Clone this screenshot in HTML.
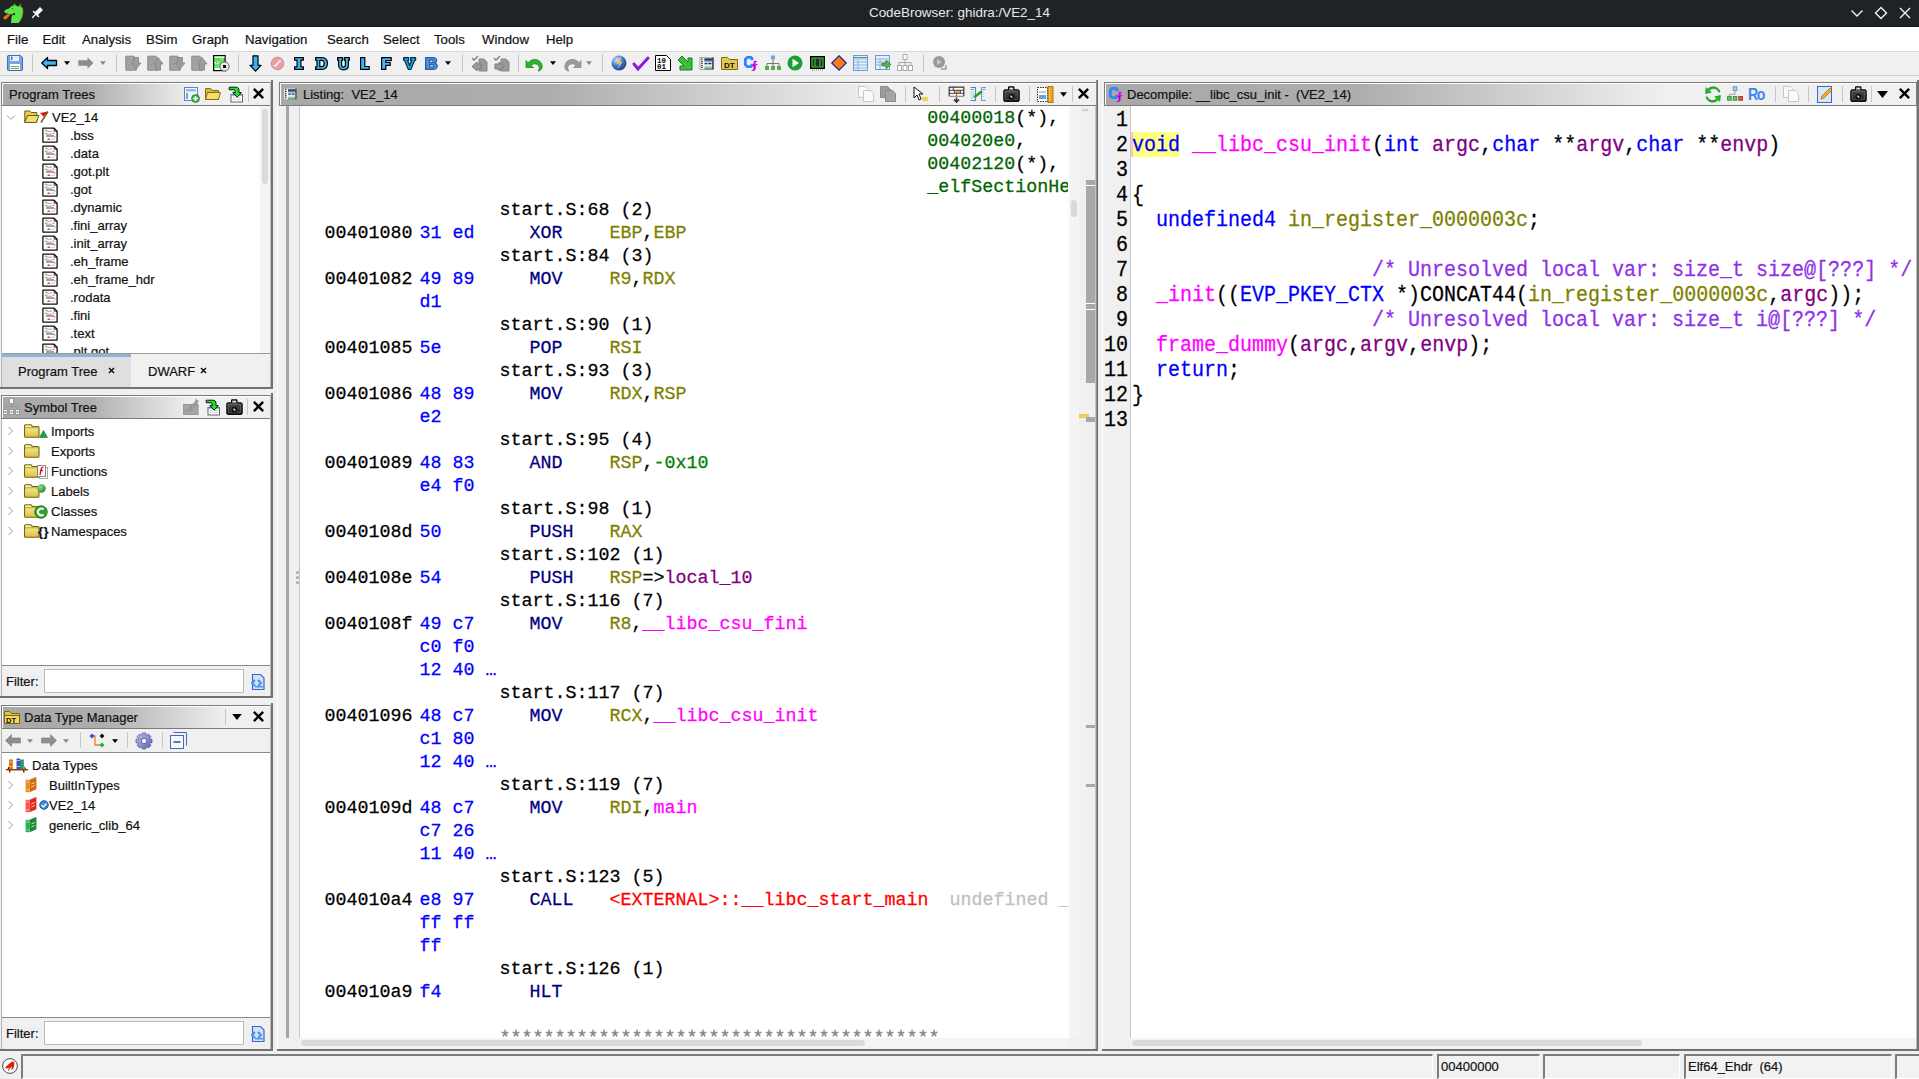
<!DOCTYPE html>
<html><head><meta charset="utf-8">
<style>
*{box-sizing:border-box;margin:0;padding:0}
html,body{width:1919px;height:1079px;overflow:hidden;background:#f0f0f0;font-family:"Liberation Sans",sans-serif;font-size:13px;color:#000}
.a{position:absolute}
svg.a{overflow:visible}
.t{position:absolute;white-space:pre;line-height:1}
.mi{position:absolute;top:33px;font-size:13.2px;white-space:pre;line-height:1;color:#111;-webkit-text-stroke:0.2px #111}
.hd{position:absolute;height:24px;border:1px solid #7b7b7b;border-bottom-color:#7b7b7b}
.hd:before{content:"";position:absolute;left:0;top:0;right:0;bottom:0;border-top:1px solid #fff;border-left:1px solid #fff}
.ht{position:absolute;font-size:13px;color:#111;white-space:pre;line-height:1;-webkit-text-stroke:0.2px #111;top:90px}
.L{position:absolute;font-family:"Liberation Mono",monospace;font-size:18.33px;line-height:23px;white-space:pre;color:#000;-webkit-text-stroke:0.25px currentColor;transform:scaleY(1.045);transform-origin:0 16.4px}
.cb{color:#0000ff}.cm{color:#000080}.creg{color:#808000}.cp{color:#000}.cnum{color:#008000}.cvar{color:#800080}.cfn{color:#ff00ff}.cext{color:#ff0000}.cund{color:#c0c0c0}.cr{color:#006400}.cstar{color:#808080}
.D{position:absolute;font-family:"Liberation Mono",monospace;font-size:20px;line-height:25px;white-space:pre;color:#000;-webkit-text-stroke:0.25px currentColor;transform:scaleY(1.08);transform-origin:0 17.8px}
.num{left:-27px;width:24px;text-align:right}
.dkw{color:#0000ff}.dfn{color:#ff00ff}.dpa{color:#800080}.dlv{color:#808000}.dcm{color:#9030e8}.dp{color:#000}
.tr{position:absolute;font-size:13px;white-space:pre;line-height:1;color:#111;-webkit-text-stroke:0.2px #111}
.vs{position:absolute;width:1px;background:#c6c6c6}
.white{position:absolute;background:#fff}
.fld{position:absolute;border-top:2px solid #7d7d7d;border-left:2px solid #7d7d7d;border-bottom:1px solid #fff;border-right:1px solid #fff;background:#f2f2f2}
</style></head><body>
<svg width="0" height="0" style="position:absolute">
<defs>
 <symbol id="doc" viewBox="0 0 16 16">
  <path d="M0.9 1.2h11.2l3 3v10.9h-14.2z" fill="#fff" stroke="#111" stroke-width="1.3" stroke-linejoin="round"/>
  <path d="M12.1 1.2v3h3" fill="none" stroke="#111" stroke-width="0.8"/>
  <path d="M2.8 3.2h2.5M2.8 6.2h2.5" stroke="#a0a040" stroke-width="1"/>
  <path d="M4.5 4.2h5.5M4 7.2h6" stroke="#8a8a8a" stroke-width="0.8"/>
  <path d="M10.5 6.2h2" stroke="#d07020" stroke-width="1"/>
  <path d="M4 9h8" stroke="#9a9a9a" stroke-width="1.8"/>
  <path d="M12 10h1.5" stroke="#666" stroke-width="0.8"/>
  <path d="M5.5 12.2h2.5" stroke="#d02020" stroke-width="1.2"/><path d="M8.5 12.2h4.5" stroke="#bbb" stroke-width="0.8"/>
 </symbol>
 <symbol id="folder" viewBox="0 0 16 14">
  <defs><linearGradient id="fg" x1="0" y1="0" x2="0" y2="1"><stop offset="0" stop-color="#fbf2a8"/><stop offset="1" stop-color="#dcc040"/></linearGradient></defs>
  <path d="M1.5 0.8h5.5l1.5 1.7h5.5a1 1 0 0 1 1 1v8.5a1.2 1.2 0 0 1-1.2 1.2h-12.3a1 1 0 0 1-1-1v-10.4a1 1 0 0 1 1-1z" fill="url(#fg)" stroke="#7a6410" stroke-width="1.1"/>
  <path d="M1 3.8h14" stroke="#a89020" stroke-width="0.8"/>
 </symbol>
 <symbol id="chevr" viewBox="0 0 8 10"><path d="M1.5 1l4 4l-4 4" fill="none" stroke="#9a9a9a" stroke-width="1"/></symbol>
 <symbol id="chevd" viewBox="0 0 10 8"><path d="M1 1.5l4 4l4-4" fill="none" stroke="#9a9a9a" stroke-width="1"/></symbol>
 <symbol id="xx" viewBox="0 0 14 14"><path d="M2 2l10 10M12 2l-10 10" stroke="#000" stroke-width="2.6"/></symbol>
 <symbol id="cam" viewBox="0 0 17 17"><defs><linearGradient id="cg" x1="0" y1="0" x2="0" y2="1"><stop offset="0" stop-color="#5a5e62"/><stop offset="1" stop-color="#1a1c1e"/></linearGradient></defs><path d="M5.5 0.8h5.5v3h4a1.2 1.2 0 0 1 1.2 1.2v9.2a1.2 1.2 0 0 1-1.2 1.2h-13a1.2 1.2 0 0 1-1.2-1.2v-9.2a1.2 1.2 0 0 1 1.2-1.2h3.5z" fill="url(#cg)" stroke="#000" stroke-width="1"/><rect x="6.5" y="1.8" width="3.5" height="1.6" fill="#e0e0e0"/><rect x="2.2" y="5.2" width="12.4" height="8.5" fill="none" stroke="#777" stroke-width="0.5"/><circle cx="8.5" cy="10.8" r="3.6" fill="#101214" stroke="#444" stroke-width="0.8"/><path d="M7.5 9.8l1.8 1.8" stroke="#f0f0f0" stroke-width="1.3"/></symbol>
 <symbol id="tri" viewBox="0 0 8 5"><path d="M0 0h8l-4 5z" fill="#000"/></symbol>
 <symbol id="trig" viewBox="0 0 8 5"><path d="M0 0h8l-4 5z" fill="#8a8a8a"/></symbol>
 <symbol id="cf" viewBox="0 0 18 18"><path d="M4 1h5l2 2v2.5h-3v-1.5h-3l-1 1v4.8l1 1h3v-1.5h3v2.5l-2 2h-5l-3-3v-6.8z" fill="#2a88ff"/><path d="M11.8 6h2.2l1.2 1.3h-1.7v2.1h1.8v1.5h-1.8v4l-1.7 2.1h-2.1l-1.2-1.2h1.7l1-1v-3.9h-1.3v-1.5h1.3v-2.1z" fill="#ee00ee"/><path d="M10.6 11h1.4v3.5l-0.8 1" stroke="#900090" stroke-width="1" fill="none"/></symbol>
 <symbol id="filt" viewBox="0 0 18 18"><path d="M3.5 1.5h8l3.5 3.5v11.5h-11.5z" fill="#cfe0f8" stroke="#3a6ac8" stroke-width="1.2"/><path d="M6 7l-3 3l3 3M9 7l3 3l-3 3" fill="none" stroke="#4a90e8" stroke-width="2"/><rect x="6" y="13" width="8" height="1.5" fill="#4aa0f0"/></symbol>
 <symbol id="dtf" viewBox="0 0 16 16"><path d="M0.5 2.5h5l2 2h8v10h-15z" fill="#e6c440" stroke="#7a6410"/><path d="M0.5 6.5h15v8h-15z" fill="#f2d860" stroke="#7a6410"/><text x="2" y="14" font-family="Liberation Sans" font-weight="bold" font-size="7.5" fill="#111">DT</text></symbol>
</defs>
</svg>

<!-- TITLE BAR -->
<div class="a" style="left:0;top:0;width:1919px;height:27px;background:#202326;border-bottom:1px solid #141618"></div>
<svg class="a" style="left:0;top:0" width="48" height="27" viewBox="0 0 48 27">
 <path d="M11 23L11.5 17L13 14.5L9 14L5.5 13L4 11.5L6 9.5L9 8.5L11 6.5L13 5.5L15.5 5L17.5 6.5L20 6L22.5 8L23 12L22 17L20 21L18.5 23z" fill="#5ae64a"/>
 <path d="M20 6L22.5 8L23 12L22 17L20 21" stroke="#8a9a10" stroke-width="1" fill="none" opacity="0.7"/>
 <path d="M13 5.5L14.5 3L16 5.2zM18.5 6L21.5 3L21 6.5z" fill="#7a8a10"/>
 <path d="M3 17.5L7 14.5L10.5 14L8.5 17L5 20z" fill="#f07010"/>
 <circle cx="14" cy="14" r="1.1" fill="#111"/><circle cx="12.5" cy="8.5" r="0.8" fill="#c03a20"/>
 <path d="M41.5 8.5L36 14" stroke="#f4f4f4" stroke-width="4.2"/>
 <path d="M33.5 11.5L38.5 16.5" stroke="#f4f4f4" stroke-width="1.6" stroke-linecap="round"/>
 <path d="M35.8 14.2L32.5 17.5" stroke="#f4f4f4" stroke-width="1.4" stroke-linecap="round"/>
</svg>
<div class="t" style="left:869px;top:6px;font-size:13.4px;color:#e8e8e8">CodeBrowser: ghidra:/VE2_14</div>
<svg class="a" style="left:1850px;top:9px" width="14" height="9" viewBox="0 0 14 9"><path d="M1.5 1.5l5.5 5.5l5.5-5.5" stroke="#f2f2f2" stroke-width="1.4" fill="none"/></svg>
<svg class="a" style="left:1874px;top:6px" width="14" height="14" viewBox="0 0 14 14"><path d="M7 1.5l5.5 5.5l-5.5 5.5l-5.5-5.5z" stroke="#f2f2f2" stroke-width="1.4" fill="none"/></svg>
<svg class="a" style="left:1899px;top:7px" width="12" height="12" viewBox="0 0 12 12"><path d="M1 1l10 10M11 1l-10 10" stroke="#f2f2f2" stroke-width="1.4"/></svg>

<!-- MENU BAR -->
<div class="a" style="left:0;top:27px;width:1919px;height:25px;background:#fff;border-bottom:1px solid #dadada"></div>
<div class="mi" style="left:7px">File</div>
<div class="mi" style="left:42.5px">Edit</div>
<div class="mi" style="left:82px">Analysis</div>
<div class="mi" style="left:146px">BSim</div>
<div class="mi" style="left:192px">Graph</div>
<div class="mi" style="left:245px">Navigation</div>
<div class="mi" style="left:327px">Search</div>
<div class="mi" style="left:383px">Select</div>
<div class="mi" style="left:434px">Tools</div>
<div class="mi" style="left:482px">Window</div>
<div class="mi" style="left:546px">Help</div>

<!-- TOOLBAR -->
<div class="a" style="left:0;top:52px;width:1919px;height:24px;background:#f0f0f0;border-bottom:1px solid #d2d2d2"></div>
<!-- separators -->
<div class="vs" style="left:32px;top:54px;height:18px"></div>
<div class="vs" style="left:116px;top:54px;height:18px"></div>
<div class="vs" style="left:238px;top:54px;height:18px"></div>
<div class="vs" style="left:462px;top:54px;height:18px"></div>
<div class="vs" style="left:518px;top:54px;height:18px"></div>
<div class="vs" style="left:602px;top:54px;height:18px"></div>
<div class="vs" style="left:923px;top:54px;height:18px"></div>
<!-- save -->
<svg class="a" style="left:7px;top:55px" width="16" height="16" viewBox="0 0 16 16"><path d="M0.5 1.5a1 1 0 0 1 1-1h12l2 2v12a1 1 0 0 1-1 1h-13a1 1 0 0 1-1-1z" fill="#7aa4e0" stroke="#3c6cc0"/><rect x="3" y="1" width="9" height="5" fill="#e8f0fb"/><rect x="4" y="1.5" width="1.4" height="3.5" fill="#3c6cc0"/><rect x="3" y="9" width="10" height="6" fill="#fff"/><rect x="4" y="11" width="8" height="1" fill="#6ab04c"/><rect x="4" y="13" width="8" height="1" fill="#6ab04c"/></svg>
<!-- back / fwd -->
<svg class="a" style="left:41px;top:57px" width="17" height="13" viewBox="0 0 17 13"><path d="M0.8 6l5.7-5.5v3h9v5h-9v3z" fill="#3fb6f6" stroke="#000" stroke-width="1.3" stroke-linejoin="round"/></svg>
<svg class="a" style="left:64px;top:61px" width="6" height="4"><use href="#tri"/></svg>
<svg class="a" style="left:77px;top:57px" width="17" height="13" viewBox="0 0 17 13"><path d="M16.4 6l-5.9-5.7v3h-9.2v5.4h9.2v3z" fill="#8c8c8c"/></svg>
<svg class="a" style="left:100px;top:61px" width="6" height="4"><use href="#trig"/></svg>
<!-- gray doc icons -->
<svg class="a" style="left:125px;top:55px" width="17" height="17" viewBox="0 0 17 17"><path d="M0.8 1.2h8l2.5 2.5v11.5h-10.5z" fill="#a3a3a3" stroke="#8a8a8a"/><path d="M2.5 4h1M4.5 5h2M2.5 7.5h1M3 10h2" stroke="#8a8a8a" stroke-width="0.6"/><path d="M8.5 2.5h5v5.5h2.5l-5 6l-5-6h2.5z" fill="#9c9c9c" stroke="#888" stroke-width="0.9" stroke-linejoin="round"/></svg>
<svg class="a" style="left:147px;top:55px" width="17" height="17" viewBox="0 0 17 17"><path d="M0.8 1.2h8l2.5 2.5v11.5h-10.5z" fill="#a3a3a3" stroke="#8a8a8a"/><path d="M2.5 4h1M4.5 5h2M2.5 7.5h1M3 10h2" stroke="#8a8a8a" stroke-width="0.6"/><path d="M8.5 15v-6h-2.5l5-6.5l5 6.5h-2.5v6z" fill="#9c9c9c" stroke="#888" stroke-width="0.9" stroke-linejoin="round"/></svg>
<svg class="a" style="left:169px;top:55px" width="17" height="17" viewBox="0 0 17 17"><path d="M0.8 1.2h8l2.5 2.5v11.5h-10.5z" fill="#a3a3a3" stroke="#8a8a8a"/><path d="M2.5 4h1M4.5 5h2M2.5 7.5h1M3 10h2" stroke="#8a8a8a" stroke-width="0.6"/><path d="M8.5 2.5h5v5.5h2.5l-5 6l-5-6h2.5z" fill="#9c9c9c" stroke="#888" stroke-width="0.9" stroke-linejoin="round"/></svg>
<svg class="a" style="left:191px;top:55px" width="17" height="17" viewBox="0 0 17 17"><path d="M0.8 1.2h8l2.5 2.5v11.5h-10.5z" fill="#a3a3a3" stroke="#8a8a8a"/><path d="M2.5 4h1M4.5 5h2M2.5 7.5h1M3 10h2" stroke="#8a8a8a" stroke-width="0.6"/><path d="M8.5 15v-6h-2.5l5-6.5l5 6.5h-2.5v6z" fill="#9c9c9c" stroke="#888" stroke-width="0.9" stroke-linejoin="round"/></svg>
<svg class="a" style="left:213px;top:55px" width="17" height="17" viewBox="0 0 17 17"><rect x="0.6" y="0.6" width="11.5" height="15" fill="#62e862" stroke="#000" stroke-width="1.2"/><rect x="1.5" y="1.5" width="10" height="1.3" fill="#fff"/><rect x="1.5" y="7" width="4" height="1.5" fill="#fff"/><rect x="1.5" y="13" width="10" height="2" fill="#fff"/><circle cx="3" cy="3.5" r="0.6" fill="#a05010"/><circle cx="5.5" cy="4.5" r="0.6" fill="#a05010"/><circle cx="3.5" cy="7.5" r="0.6" fill="#a05010"/><circle cx="11.5" cy="11.5" r="4.6" fill="#e8e8e8" stroke="#666" stroke-width="1"/><rect x="10" y="10" width="3" height="3" fill="#111"/></svg>
<!-- down arrow, no-sign -->
<svg class="a" style="left:249px;top:55px" width="13" height="17" viewBox="0 0 13 17"><path d="M4 0.8h5v9.5h3l-5.5 5.8l-5.5-5.8h3z" fill="#3fb0f6" stroke="#000" stroke-width="1.2" stroke-linejoin="round"/></svg>
<svg class="a" style="left:270px;top:56px" width="15" height="15" viewBox="0 0 15 15"><circle cx="7.5" cy="7.5" r="6.3" fill="#e6a0a0" stroke="#dc8a8a" stroke-width="1"/><path d="M4.3 10.7l6.4-6.4" stroke="#f8e4e4" stroke-width="2.2"/></svg>
<!-- letter icons -->
<svg class="a" style="left:294px;top:57px" width="11" height="13" viewBox="0 0 11 13"><path d="M0.6 0.6h8.8v2.6h-2.5v6.6h2.5v2.6h-8.8v-2.6h2.5v-6.6h-2.5z" fill="#3cb8f8" stroke="#000" stroke-width="1.2" fill-rule="evenodd" stroke-linejoin="round"/></svg>
<svg class="a" style="left:315px;top:57px" width="14" height="13" viewBox="0 0 14 13"><path d="M0.6 0.6h6.4c3.6 0 5.4 2.4 5.4 5.9s-1.8 5.9-5.4 5.9h-6.4v-2.6h1.4v-6.6h-1.4z M4.8 3.3v6.4h1.8c1.6 0 2.6-1.2 2.6-3.2s-1-3.2-2.6-3.2z" fill="#3cb8f8" stroke="#000" stroke-width="1.2" fill-rule="evenodd" stroke-linejoin="round"/></svg>
<svg class="a" style="left:337px;top:57px" width="14" height="13" viewBox="0 0 14 13"><path d="M0.6 0.6h5v2.6h-1v4.8c0 1.5 0.7 2.1 1.9 2.1s1.9-0.6 1.9-2.1v-4.8h-1v-2.6h5v2.6h-1v5c0 3-1.9 4.6-4.9 4.6s-4.9-1.6-4.9-4.6v-5h-1z" fill="#3cb8f8" stroke="#000" stroke-width="1.2" fill-rule="evenodd" stroke-linejoin="round"/></svg>
<svg class="a" style="left:360px;top:57px" width="11" height="13" viewBox="0 0 11 13"><path d="M0.6 0.6h4.2v8.9h4.4v2.9h-8.6z" fill="#3cb8f8" stroke="#000" stroke-width="1.2" fill-rule="evenodd" stroke-linejoin="round"/></svg>
<svg class="a" style="left:381px;top:57px" width="12" height="13" viewBox="0 0 12 13"><path d="M0.6 0.6h9.6v3h-5.4v1.9h4.4v2.9h-4.4v4h-4.2z" fill="#3cb8f8" stroke="#000" stroke-width="1.2" fill-rule="evenodd" stroke-linejoin="round"/></svg>
<svg class="a" style="left:403px;top:57px" width="14" height="13" viewBox="0 0 14 13"><path d="M0.6 0.6h5v2.6h-1l2 5.6l2-5.6h-1v-2.6h5v2.6h-1l-3.6 9.2h-2.8l-3.6-9.2h-1z" fill="#18a8f0" stroke="#0a2a40" stroke-width="1.2" fill-rule="evenodd" stroke-linejoin="round"/></svg>
<svg class="a" style="left:425px;top:57px" width="14" height="13" viewBox="0 0 14 13"><path d="M0.6 0.6h7c2.6 0 4 1.2 4 3c0 1.3-0.8 2.2-2 2.6c1.5 0.4 2.5 1.4 2.5 3c0 2.2-1.7 3.2-4.5 3.2h-7z M4.6 3.1v2.5h2.4c0.8 0 1.3-0.4 1.3-1.25s-0.5-1.25-1.3-1.25z M4.6 7.6v2.6h2.8c0.9 0 1.4-0.5 1.4-1.3s-0.5-1.3-1.4-1.3z" fill="#4a94dc" stroke="#2a5aa8" stroke-width="1.2" fill-rule="evenodd" stroke-linejoin="round"/></svg>
<svg class="a" style="left:445px;top:61px" width="6" height="4"><use href="#tri"/></svg>
<!-- gray check-doc icons -->
<svg class="a" style="left:471px;top:55px" width="17" height="17" viewBox="0 0 17 17"><path d="M1 3l2 2l4-4" stroke="#888" stroke-width="1.6" fill="none"/><path d="M8 4h5l3 3v9h-8z" fill="#999" stroke="#888"/><path d="M10 9h-4v-2l-5 4.5l5 4.5v-2h4z" fill="#9a9a9a" stroke="#7c7c7c"/></svg>
<svg class="a" style="left:493px;top:55px" width="17" height="17" viewBox="0 0 17 17"><path d="M1 3l2 2l4-4" stroke="#888" stroke-width="1.6" fill="none"/><path d="M8 4h5l3 3v9h-8z" fill="#999" stroke="#888"/><path d="M2 9h4v-2l5 4.5l-5 4.5v-2h-4z" fill="#9a9a9a" stroke="#7c7c7c"/></svg>
<!-- undo / redo -->
<svg class="a" style="left:526px;top:57px" width="18" height="15" viewBox="0 0 18 15"><path d="M2 6c3-5 12-5 14 2c1 4-2 6-4 6c2-2 2-6-2-7c-2-0.5-4 0-5 2l2.5 1.5h-7.5v-7z" fill="#30b030" stroke="#1c8a1c" stroke-width="0.8"/></svg>
<svg class="a" style="left:550px;top:61px" width="6" height="4"><use href="#tri"/></svg>
<svg class="a" style="left:563px;top:57px" width="18" height="15" viewBox="0 0 18 15"><path d="M16 6c-3-5-12-5-14 2c-1 4 2 6 4 6c-2-2-2-6 2-7c2-0.5 4 0 5 2l-2.5 1.5h7.5v-7z" fill="#9a9a9a" stroke="#888" stroke-width="0.8"/></svg>
<svg class="a" style="left:586px;top:61px" width="6" height="4"><use href="#trig"/></svg>
<!-- globe -->
<svg class="a" style="left:611px;top:55px" width="16" height="16" viewBox="0 0 16 16"><defs><radialGradient id="gl" cx="0.35" cy="0.3" r="0.8"><stop offset="0" stop-color="#cfe6ff"/><stop offset="0.5" stop-color="#3a78d0"/><stop offset="1" stop-color="#123a80"/></radialGradient></defs><circle cx="8" cy="8" r="7.5" fill="url(#gl)"/><path d="M9.5 1.5l-4 7h3l-2 6l5-8h-3l2-5z" fill="#ffc93a"/></svg>
<!-- check -->
<svg class="a" style="left:633px;top:56px" width="17" height="15" viewBox="0 0 17 15"><path d="M1 8l4 5l10-11" stroke="#8a1ae0" stroke-width="3" fill="none" stroke-linecap="round"/></svg>
<!-- 1001 -->
<svg class="a" style="left:655px;top:55px" width="16" height="16" viewBox="0 0 16 16"><path d="M0.5 0.5h11l4 4v11h-15z" fill="#fff" stroke="#000"/><text x="2" y="7.5" font-family="Liberation Mono" font-weight="bold" font-size="7.5" fill="#000">10</text><text x="2" y="14" font-family="Liberation Mono" font-weight="bold" font-size="7.5" fill="#000">01</text></svg>
<!-- green arrow -->
<svg class="a" style="left:677px;top:55px" width="16" height="16" viewBox="0 0 16 16"><path d="M1 5l4-4l6 6v-4h4v12h-12v-4h4z" fill="#3cc03c" stroke="#1a7a2a"/></svg>
<!-- film -->
<svg class="a" style="left:700px;top:57px" width="14" height="13" viewBox="0 0 13 12"><defs><linearGradient id="lsg2" x1="0" y1="0" x2="0" y2="1"><stop offset="0" stop-color="#a0e0a0"/><stop offset="0.15" stop-color="#1a2a70"/><stop offset="0.45" stop-color="#e8f0ff"/><stop offset="0.7" stop-color="#d0f4e0"/><stop offset="1" stop-color="#607a60"/></linearGradient></defs><rect x="0" y="0.5" width="12.5" height="11" fill="#fafafa" stroke="#666" stroke-width="0.5"/><circle cx="1.8" cy="1.8" r="0.7" fill="#000"/><circle cx="1.8" cy="3.8" r="0.7" fill="#000"/><circle cx="1.8" cy="5.8" r="0.7" fill="#000"/><circle cx="1.8" cy="7.8" r="0.7" fill="#000"/><circle cx="1.8" cy="9.8" r="0.7" fill="#000"/><rect x="4" y="0.5" width="7.5" height="11" fill="url(#lsg2)"/><rect x="4.3" y="5.5" width="2.5" height="1.2" fill="#1a2a60"/><rect x="7.6" y="5.5" width="3" height="1.2" fill="#1a2a60"/><rect x="11.4" y="0.5" width="1.1" height="11" fill="#1a2a1a"/></svg>
<!-- DT folder -->
<svg class="a" style="left:721px;top:55px" width="17" height="16" viewBox="0 0 17 16"><path d="M0.5 2.5h6l2 2h8v10h-16z" fill="#e8c84a" stroke="#7a6a10"/><text x="3" y="13" font-family="Liberation Sans" font-weight="bold" font-size="8" fill="#111">DT</text></svg>
<!-- Cf -->
<svg class="a" style="left:743px;top:55px" width="17" height="17"><use href="#cf"/></svg>
<!-- tree -->
<svg class="a" style="left:765px;top:55px" width="16" height="16" viewBox="0 0 16 16"><rect x="6" y="0.5" width="4" height="4" fill="#6aa8f0"/><path d="M8 4.5v4M2 8.5h12M2 8.5v3M8 8.5v3M14 8.5v3" stroke="#777"/><rect x="0" y="11" width="4" height="4" fill="#52b052"/><rect x="6" y="11" width="4" height="4" fill="#52b052"/><rect x="12" y="11" width="4" height="4" fill="#52b052"/></svg>
<!-- play -->
<svg class="a" style="left:787px;top:55px" width="16" height="16" viewBox="0 0 16 16"><circle cx="8" cy="8" r="7.5" fill="#18a030"/><path d="M5.5 3.8l6.5 4.2l-6.5 4.2z" fill="#fff"/></svg>
<!-- chip -->
<svg class="a" style="left:810px;top:56px" width="15" height="15" viewBox="0 0 15 15"><rect x="0.5" y="0.5" width="14" height="12" fill="#111" stroke="#000"/><rect x="2" y="2" width="11" height="9" fill="#2a2a2a" stroke="#2ee02e" stroke-width="1"/><path d="M5 3v7M10 3v7" stroke="#2ee02e"/><path d="M2 14h11" stroke="#888" stroke-dasharray="1 1"/></svg>
<!-- diamond -->
<svg class="a" style="left:831px;top:55px" width="16" height="16" viewBox="0 0 16 16"><path d="M8 0.8l7.2 7.2l-7.2 7.2l-7.2-7.2z" fill="#ff7a10" stroke="#1a2aa0" stroke-width="1.3"/></svg>
<!-- table -->
<svg class="a" style="left:853px;top:55px" width="15" height="16" viewBox="0 0 15 16"><rect x="0.5" y="0.5" width="14" height="15" fill="#e8f0fb" stroke="#6a9ad8"/><path d="M1 4h13M1 7h13M1 10h13M1 13h13M5 4v11" stroke="#8ab0e0"/><path d="M1 2.5h13" stroke="#4aa04a"/></svg>
<svg class="a" style="left:875px;top:55px" width="17" height="16" viewBox="0 0 17 16"><rect x="0.5" y="0.5" width="14" height="14" fill="#e8f0fb" stroke="#6a9ad8"/><path d="M1 4h13M1 7h13M1 10h13M5 4v10" stroke="#8ab0e0"/><path d="M7 8h4v-3l5 4.5l-5 4.5v-3h-4z" fill="#5ab04a" stroke="#2a7a2a" stroke-width="0.7"/></svg>
<svg class="a" style="left:897px;top:54px" width="16" height="17" viewBox="0 0 16 17"><path d="M6 0.5h4v5h-4z" fill="#fff" stroke="#aaa"/><path d="M8 5.5v3M2 8.5h12M2 8.5v3M8 8.5v3M14 8.5v3" stroke="#aaa"/><rect x="0.5" y="11.5" width="4" height="5" fill="#fff" stroke="#aaa"/><rect x="6" y="11.5" width="4" height="5" fill="#fff" stroke="#aaa"/><rect x="11.5" y="11.5" width="4" height="5" fill="#fff" stroke="#aaa"/></svg>
<!-- gray play -->
<svg class="a" style="left:932px;top:55px" width="16" height="16" viewBox="0 0 16 16"><circle cx="7" cy="7" r="6" fill="#9a9a9a"/><path d="M5 4l5 3l-5 3z" fill="#c8c8c8"/><path d="M9 14h5v-4" stroke="#9a9a9a" stroke-width="1.5" fill="none"/></svg>

<div class="hd" style="left:1px;top:82px;width:271px;background:linear-gradient(90deg,#a8a8a8 0px,#adadad 85px,#f0f0f0 190px)"></div>
<div class="ht" style="left:9px;top:88px">Program Trees</div>
<svg class="a" style="left:184px;top:87px" width="16" height="16" viewBox="0 0 16 16"><rect x="0.5" y="0.5" width="13" height="13" fill="#f2f6fc" stroke="#5a86c8"/><rect x="2" y="2" width="10" height="2.5" fill="#9ab8e8"/><rect x="2" y="6" width="2" height="6" fill="#7aa0d8"/><circle cx="11.5" cy="11.5" r="4" fill="#3aaa3a" stroke="#1a7a1a" stroke-width="0.6"/><path d="M11.5 9v5M9 11.5h5" stroke="#fff" stroke-width="1.6"/></svg>
<svg class="a" style="left:205px;top:86px" width="16" height="15" viewBox="0 0 16 15"><path d="M0.5 2.5h5l2 2h6v9h-13z" fill="#d8b838" stroke="#8a6a10"/><path d="M2.5 6.5h13l-2 7h-13z" fill="#f6de6a" stroke="#8a6a10"/></svg>
<svg class="a" style="left:228px;top:86px" width="16" height="17" viewBox="0 0 16 17"><rect x="3" y="8.5" width="11.5" height="7.5" fill="#fff" stroke="#555" stroke-width="0.9"/><path d="M3.4 8.9h10.7" stroke="#3a8af0" stroke-width="1.3"/><path d="M5 11.5h2.5M9 11.5h3.5M5 13.5h2.5M9 13.5h3.5" stroke="#bbb" stroke-width="0.8"/><path d="M1.2 1.2h6.6c2.2 0 3.2 1.1 3.2 3.2v2.2h2.4l-4.3 4.6l-4.3-4.6h2.4v-1.6c0-0.8-0.4-1.2-1.2-1.2h-4.8z" fill="#22e622" stroke="#000" stroke-width="0.9" stroke-linejoin="round"/></svg>
<div class="vs" style="left:248px;top:86px;height:16px"></div>
<svg class="a" style="left:252px;top:87px" width="13" height="13"><use href="#xx"/></svg>
<div class="white" style="left:2px;top:106px;width:258px;height:247px"></div>
<div class="a" style="left:1px;top:106px;width:1px;height:282px;background:#b4b4b4"></div>
<div class="a" style="left:260px;top:106px;width:10px;height:247px;background:#f4f4f4"></div>
<div class="a" style="left:262px;top:109px;width:6px;height:75px;border-radius:3px;background:#dadada"></div>
<div class="a" style="left:270px;top:82px;width:1px;height:307px;background:#bdbdbd"></div>
<div class="a" style="left:271px;top:80px;width:2px;height:309px;background:#727272"></div>
<svg class="a" style="left:6px;top:114px" width="10" height="8"><use href="#chevd"/></svg>
<svg class="a" style="left:24px;top:110px" width="16" height="14" viewBox="0 0 16 14"><path d="M0.8 1h5l1.5 1.5h5.5v9.5h-12z" fill="#e6cc50" stroke="#6a5a10"/><path d="M3.5 5.5h11.5l-2.8 7h-11.5z" fill="#f2dc6a" stroke="#6a5a10"/></svg>
<svg class="a" style="left:38px;top:111px" width="11" height="13" viewBox="0 0 11 13"><path d="M10 0.5l-7 11" stroke="#7a6418" stroke-width="1.6"/><path d="M10 0.5l-8 1.5l3.5 3.5z" fill="#e01010"/></svg>
<div class="tr" style="left:52px;top:111px">VE2_14</div>
<div class="a" style="left:2px;top:106px;width:257px;height:247px;overflow:hidden">
<svg class="a" style="left:40px;top:21px" width="16" height="16"><use href="#doc"/></svg>
<div class="tr" style="left:68px;top:23px">.bss</div>
<svg class="a" style="left:40px;top:39px" width="16" height="16"><use href="#doc"/></svg>
<div class="tr" style="left:68px;top:41px">.data</div>
<svg class="a" style="left:40px;top:57px" width="16" height="16"><use href="#doc"/></svg>
<div class="tr" style="left:68px;top:59px">.got.plt</div>
<svg class="a" style="left:40px;top:75px" width="16" height="16"><use href="#doc"/></svg>
<div class="tr" style="left:68px;top:77px">.got</div>
<svg class="a" style="left:40px;top:93px" width="16" height="16"><use href="#doc"/></svg>
<div class="tr" style="left:68px;top:95px">.dynamic</div>
<svg class="a" style="left:40px;top:111px" width="16" height="16"><use href="#doc"/></svg>
<div class="tr" style="left:68px;top:113px">.fini_array</div>
<svg class="a" style="left:40px;top:129px" width="16" height="16"><use href="#doc"/></svg>
<div class="tr" style="left:68px;top:131px">.init_array</div>
<svg class="a" style="left:40px;top:147px" width="16" height="16"><use href="#doc"/></svg>
<div class="tr" style="left:68px;top:149px">.eh_frame</div>
<svg class="a" style="left:40px;top:165px" width="16" height="16"><use href="#doc"/></svg>
<div class="tr" style="left:68px;top:167px">.eh_frame_hdr</div>
<svg class="a" style="left:40px;top:183px" width="16" height="16"><use href="#doc"/></svg>
<div class="tr" style="left:68px;top:185px">.rodata</div>
<svg class="a" style="left:40px;top:201px" width="16" height="16"><use href="#doc"/></svg>
<div class="tr" style="left:68px;top:203px">.fini</div>
<svg class="a" style="left:40px;top:219px" width="16" height="16"><use href="#doc"/></svg>
<div class="tr" style="left:68px;top:221px">.text</div>
<svg class="a" style="left:40px;top:237px" width="16" height="16"><use href="#doc"/></svg>
<div class="tr" style="left:68px;top:239px">.plt.got</div>
</div>
<div class="a" style="left:2px;top:353px;width:268px;height:1px;background:#9a9a9a"></div>
<div class="a" style="left:2px;top:354px;width:129px;height:3px;background:#8db4dc"></div>
<div class="a" style="left:2px;top:357px;width:129px;height:30px;background:#dfdfdf"></div>
<div class="tr" style="left:18px;top:365px">Program Tree</div>
<svg class="a" style="left:108px;top:367px" width="7" height="7"><path d="M1 1l5 5M6 1l-5 5" stroke="#111" stroke-width="1.5"/></svg>
<div class="tr" style="left:148px;top:365px">DWARF</div>
<svg class="a" style="left:200px;top:367px" width="7" height="7"><path d="M1 1l5 5M6 1l-5 5" stroke="#111" stroke-width="1.5"/></svg>
<div class="a" style="left:0px;top:387px;width:273px;height:2px;background:#727272"></div>
<div class="hd" style="left:1px;top:395px;width:271px;background:linear-gradient(90deg,#a8a8a8 0px,#adadad 85px,#f0f0f0 190px)"></div>
<svg class="a" style="left:3px;top:398px" width="17" height="17" viewBox="0 0 17 17"><path d="M6.5 0.5h4v5h-4z" fill="#fff" stroke="#999"/><path d="M8.5 5.5v3M2.5 8.5h12M2.5 8.5v3M8.5 8.5v3M14.5 8.5v3" stroke="#999"/><rect x="0.5" y="11.5" width="4" height="5" fill="#fff" stroke="#999"/><rect x="6.5" y="11.5" width="4" height="5" fill="#fff" stroke="#999"/><rect x="12.5" y="11.5" width="4" height="5" fill="#fff" stroke="#999"/><rect x="1.5" y="13" width="2" height="2" fill="#5a9ae0"/><rect x="7.5" y="13" width="2" height="2" fill="#f08a4a"/><rect x="13.5" y="13" width="2" height="2" fill="#5ac05a"/></svg>
<div class="ht" style="left:24px;top:401px">Symbol Tree</div>
<svg class="a" style="left:183px;top:398px" width="16" height="17" viewBox="0 0 16 17"><rect x="0.6" y="6.6" width="14.5" height="9.8" fill="#a6a6a6" stroke="#8e8e8e" stroke-width="0.9"/><path d="M4.2 13.5h-1.5v-1.5M3.5 12.8l8.5-9" stroke="#8a8a8a" stroke-width="0.8" fill="none"/><path d="M5.5 12l7-8.5l2 1.8l-7 8.3z" fill="#9c9c9c" stroke="#8a8a8a" stroke-width="0.6"/><path d="M12 2.5l1.3-1.2l2.2 2l-1.2 1.3z" fill="#a0a0a0" stroke="#888" stroke-width="0.6"/></svg>
<svg class="a" style="left:205px;top:399px" width="16" height="17" viewBox="0 0 16 17"><rect x="3" y="8.5" width="11.5" height="7.5" fill="#fff" stroke="#555" stroke-width="0.9"/><path d="M3.4 8.9h10.7" stroke="#3a8af0" stroke-width="1.3"/><path d="M5 11.5h2.5M9 11.5h3.5M5 13.5h2.5M9 13.5h3.5" stroke="#bbb" stroke-width="0.8"/><path d="M1.2 1.2h6.6c2.2 0 3.2 1.1 3.2 3.2v2.2h2.4l-4.3 4.6l-4.3-4.6h2.4v-1.6c0-0.8-0.4-1.2-1.2-1.2h-4.8z" fill="#22e622" stroke="#000" stroke-width="0.9" stroke-linejoin="round"/></svg>
<svg class="a" style="left:226px;top:399px" width="17" height="17"><use href="#cam"/></svg>
<div class="vs" style="left:247px;top:399px;height:16px"></div>
<svg class="a" style="left:252px;top:400px" width="13" height="13"><use href="#xx"/></svg>
<div class="white" style="left:2px;top:419px;width:268px;height:246px"></div>
<div class="a" style="left:1px;top:419px;width:1px;height:278px;background:#b4b4b4"></div>
<div class="a" style="left:270px;top:395px;width:1px;height:302px;background:#bdbdbd"></div>
<div class="a" style="left:271px;top:393px;width:2px;height:305px;background:#727272"></div>
<svg class="a" style="left:7px;top:426px" width="8" height="10"><use href="#chevr"/></svg>
<svg class="a" style="left:24px;top:424px" width="16" height="14"><use href="#folder"/></svg>
<div class="tr" style="left:51px;top:425px">Imports</div>
<svg class="a" style="left:7px;top:446px" width="8" height="10"><use href="#chevr"/></svg>
<svg class="a" style="left:24px;top:444px" width="16" height="14"><use href="#folder"/></svg>
<div class="tr" style="left:51px;top:445px">Exports</div>
<svg class="a" style="left:7px;top:466px" width="8" height="10"><use href="#chevr"/></svg>
<svg class="a" style="left:24px;top:464px" width="16" height="14"><use href="#folder"/></svg>
<div class="tr" style="left:51px;top:465px">Functions</div>
<svg class="a" style="left:7px;top:486px" width="8" height="10"><use href="#chevr"/></svg>
<svg class="a" style="left:24px;top:484px" width="16" height="14"><use href="#folder"/></svg>
<div class="tr" style="left:51px;top:485px">Labels</div>
<svg class="a" style="left:7px;top:506px" width="8" height="10"><use href="#chevr"/></svg>
<svg class="a" style="left:24px;top:504px" width="16" height="14"><use href="#folder"/></svg>
<div class="tr" style="left:51px;top:505px">Classes</div>
<svg class="a" style="left:7px;top:526px" width="8" height="10"><use href="#chevr"/></svg>
<svg class="a" style="left:24px;top:524px" width="16" height="14"><use href="#folder"/></svg>
<div class="tr" style="left:51px;top:525px">Namespaces</div>
<svg class="a" style="left:39px;top:430px" width="9" height="8" viewBox="0 0 9 8"><path d="M4.5 0.5l4 7h-8z" fill="#2a9a4a" stroke="#1a6a30" stroke-width="0.6"/></svg>
<svg class="a" style="left:37px;top:465px" width="11" height="14" viewBox="0 0 11 14"><rect x="2.5" y="2.5" width="8" height="11" fill="#fff" stroke="#aaa"/><rect x="0.5" y="0.5" width="8" height="11" fill="#fff" stroke="#888"/><path d="M6.5 2.5c-1.5-0.5-2 0.3-2.3 1.5l-1.2 6M3 5.5h3" stroke="#e01010" stroke-width="1.3" fill="none"/></svg>
<svg class="a" style="left:37px;top:484px" width="9" height="9"><defs><radialGradient id="lg" cx="0.35" cy="0.35" r="0.7"><stop offset="0" stop-color="#8ae08a"/><stop offset="1" stop-color="#2a8a2a"/></radialGradient></defs><circle cx="4.5" cy="4.5" r="4.2" fill="url(#lg)"/></svg>
<svg class="a" style="left:34px;top:505px" width="14" height="14"><circle cx="7" cy="7" r="6.3" fill="#30a030" stroke="#1a7a1a" stroke-width="0.8"/><path d="M9.5 4.6a3.3 3.3 0 1 0 0 4.8" stroke="#fff" stroke-width="2" fill="none"/></svg>
<div class="tr" style="left:38px;top:525px;font-weight:bold;font-size:13px;letter-spacing:0.5px">{}</div>
<div class="a" style="left:2px;top:665px;width:268px;height:1px;background:#8a8a8a"></div>
<div class="tr" style="left:6px;top:675px">Filter:</div>
<div class="a" style="left:44px;top:669px;width:200px;height:24px;background:#fff;border:1px solid #b9b9b9"></div>
<svg class="a" style="left:249px;top:673px" width="18" height="18"><use href="#filt"/></svg>
<div class="a" style="left:0px;top:696px;width:273px;height:2px;background:#727272"></div>
<div class="hd" style="left:1px;top:705px;width:271px;background:linear-gradient(90deg,#a8a8a8 0px,#adadad 101px,#f0f0f0 225px)"></div>
<svg class="a" style="left:4px;top:709px" width="16" height="16"><use href="#dtf"/></svg>
<div class="ht" style="left:24px;top:711px">Data Type Manager</div>
<div class="vs" style="left:225px;top:709px;height:16px"></div>
<svg class="a" style="left:232px;top:714px" width="10" height="6"><use href="#tri"/></svg>
<svg class="a" style="left:252px;top:710px" width="13" height="13"><use href="#xx"/></svg>
<svg class="a" style="left:5px;top:734px" width="16" height="13" viewBox="0 0 16 13"><path d="M0.5 6.5l6-6v3.5h9v5h-9v3.5z" fill="#8e8e8e" stroke="#7a7a7a" stroke-width="0.6"/></svg>
<svg class="a" style="left:27px;top:739px" width="6" height="4"><use href="#trig"/></svg>
<svg class="a" style="left:41px;top:734px" width="16" height="13" viewBox="0 0 16 13"><path d="M15.5 6.5l-6-6v3.5h-9v5h9v3.5z" fill="#8e8e8e" stroke="#7a7a7a" stroke-width="0.6"/></svg>
<svg class="a" style="left:63px;top:739px" width="6" height="4"><use href="#trig"/></svg>
<div class="vs" style="left:80px;top:732px;height:16px"></div>
<svg class="a" style="left:89px;top:733px" width="16" height="14" viewBox="0 0 16 14"><path d="M3 3h3v9h5" stroke="#f08020" stroke-width="1.3" fill="none"/><path d="M3 0.5l2.5 2.5l-2.5 2.5l-2.5-2.5z" fill="#2a4af0"/><path d="M13 0.5l2.5 2.5l-2.5 2.5l-2.5-2.5z" fill="#111"/><path d="M13 9.5l2.5 2.5l-2.5 2.5l-2.5-2.5z" fill="#20b030"/></svg>
<svg class="a" style="left:112px;top:739px" width="6" height="4"><use href="#tri"/></svg>
<div class="vs" style="left:127px;top:732px;height:16px"></div>
<svg class="a" style="left:135px;top:732px" width="18" height="18" viewBox="0 0 18 18"><defs><linearGradient id="gr" x1="0" y1="0" x2="1" y2="1"><stop offset="0" stop-color="#c0c4f0"/><stop offset="1" stop-color="#5a60b0"/></linearGradient></defs><polygon points="17.00,7.21 17.00,10.79 14.62,11.11 14.47,11.48 15.92,13.39 13.39,15.92 11.48,14.47 11.11,14.62 10.79,17.00 7.21,17.00 6.89,14.62 6.52,14.47 4.61,15.92 2.08,13.39 3.53,11.48 3.38,11.11 1.00,10.79 1.00,7.21 3.38,6.89 3.53,6.52 2.08,4.61 4.61,2.08 6.52,3.53 6.89,3.38 7.21,1.00 10.79,1.00 11.11,3.38 11.48,3.53 13.39,2.08 15.92,4.61 14.47,6.52 14.62,6.89" fill="url(#gr)" stroke="#4a4a90" stroke-width="0.7"/><circle cx="9" cy="9" r="2.8" fill="#f0f0f0" stroke="#4a4a90" stroke-width="0.8"/></svg>
<div class="vs" style="left:162px;top:732px;height:16px"></div>
<svg class="a" style="left:170px;top:732px" width="17" height="17" viewBox="0 0 17 17"><path d="M3.5 0.5h13v13" fill="none" stroke="#4a6ab0"/><rect x="0.5" y="3.5" width="13" height="13" fill="#f4f6fb" stroke="#4a6ab0"/><path d="M3.5 10h7" stroke="#2a4a90" stroke-width="1.5"/></svg>
<div class="a" style="left:2px;top:752px;width:268px;height:1px;background:#8a8a8a"></div>
<div class="white" style="left:2px;top:753px;width:268px;height:264px"></div>
<div class="a" style="left:1px;top:728px;width:1px;height:322px;background:#b4b4b4"></div>
<div class="a" style="left:270px;top:705px;width:1px;height:345px;background:#bdbdbd"></div>
<div class="a" style="left:271px;top:703px;width:2px;height:348px;background:#727272"></div>
<svg class="a" style="left:5px;top:758px" width="24" height="15" viewBox="0 0 24 15"><path d="M0.5 11h23l-1 1.5h-21z" fill="#9a3a10"/><rect x="4" y="12" width="1.5" height="2.5" fill="#7a2a08"/><rect x="18" y="12" width="1.5" height="2.5" fill="#7a2a08"/><path d="M2.5 11l1.5-3v3zM21 11l-1.5-3v3z" fill="#111"/><rect x="4" y="1.5" width="3.8" height="9.5" fill="#e07010"/><path d="M4 4h3.8M4 8.5h3.8" stroke="#ffd060" stroke-width="0.8"/><rect x="11.5" y="0.5" width="3.5" height="10.5" fill="#3050e0"/><path d="M11.5 2.5h3.5M11.5 8.5h3.5" stroke="#ffe060" stroke-width="0.8"/><rect x="15" y="1.5" width="3.8" height="9.5" fill="#20a060"/></svg>
<div class="tr" style="left:32px;top:759px">Data Types</div>
<svg class="a" style="left:7px;top:780px" width="8" height="10"><use href="#chevr"/></svg>
<svg class="a" style="left:25px;top:776px" width="12" height="17" viewBox="0 0 12 17"><path d="M0.6 3.8h4v12.4h-4z" fill="#f08a20"/><path d="M0.6 3.8l6.4-2.8h4.4l-6.8 2.8z" fill="#fff" stroke="#ddd" stroke-width="0.4"/><path d="M4.6 3.8l6.8-2.8v12.2l-6.8 3z" fill="#d06a10"/><path d="M6.3 8l3.4-1.6M6.3 11l3.4-1.6" stroke="#ffe070" stroke-width="1"/><path d="M0.6 6h4M0.6 14h4" stroke="#ffd080" stroke-width="0.7"/></svg>
<div class="tr" style="left:49px;top:779px">BuiltInTypes</div>
<svg class="a" style="left:7px;top:800px" width="8" height="10"><use href="#chevr"/></svg>
<svg class="a" style="left:25px;top:796px" width="12" height="17" viewBox="0 0 12 17"><path d="M0.6 3.8h4v12.4h-4z" fill="#ff5050"/><path d="M0.6 3.8l6.4-2.8h4.4l-6.8 2.8z" fill="#fff" stroke="#ddd" stroke-width="0.4"/><path d="M4.6 3.8l6.8-2.8v12.2l-6.8 3z" fill="#e02a2a"/><path d="M6.3 8l3.4-1.6M6.3 11l3.4-1.6" stroke="#ffe070" stroke-width="1"/><path d="M0.6 6h4M0.6 14h4" stroke="#ffd080" stroke-width="0.7"/></svg>
<div class="tr" style="left:49px;top:799px">VE2_14</div>
<svg class="a" style="left:7px;top:820px" width="8" height="10"><use href="#chevr"/></svg>
<svg class="a" style="left:25px;top:816px" width="12" height="17" viewBox="0 0 12 17"><path d="M0.6 3.8h4v12.4h-4z" fill="#20b060"/><path d="M0.6 3.8l6.4-2.8h4.4l-6.8 2.8z" fill="#fff" stroke="#ddd" stroke-width="0.4"/><path d="M4.6 3.8l6.8-2.8v12.2l-6.8 3z" fill="#108a40"/><path d="M6.3 8l3.4-1.6M6.3 11l3.4-1.6" stroke="#ffe070" stroke-width="1"/><path d="M0.6 6h4M0.6 14h4" stroke="#ffd080" stroke-width="0.7"/></svg>
<div class="tr" style="left:49px;top:819px">generic_clib_64</div>
<svg class="a" style="left:39px;top:800px" width="10" height="10"><circle cx="5" cy="5" r="4.3" fill="#3a8ad8" stroke="#1a3a8a" stroke-width="0.8"/><path d="M2.5 5l2 2l3-3.5" stroke="#fff" stroke-width="1.3" fill="none"/></svg>
<div class="a" style="left:2px;top:1017px;width:268px;height:1px;background:#8a8a8a"></div>
<div class="tr" style="left:6px;top:1027px">Filter:</div>
<div class="a" style="left:44px;top:1021px;width:200px;height:24px;background:#fff;border:1px solid #b9b9b9"></div>
<svg class="a" style="left:249px;top:1025px" width="18" height="18"><use href="#filt"/></svg>
<div class="a" style="left:0px;top:1049px;width:273px;height:2px;background:#727272"></div>
<div class="hd" style="left:279px;top:82px;width:818px;background:linear-gradient(90deg,#a8a8a8 0px,#adadad 270px,#f0f0f0 600px)"></div>
<svg class="a" style="left:284px;top:88px" width="13" height="12" viewBox="0 0 13 12"><defs><linearGradient id="lsg" x1="0" y1="0" x2="0" y2="1"><stop offset="0" stop-color="#a0e0a0"/><stop offset="0.15" stop-color="#1a2a70"/><stop offset="0.45" stop-color="#e8f0ff"/><stop offset="0.7" stop-color="#d0f4e0"/><stop offset="1" stop-color="#607a60"/></linearGradient></defs><rect x="0" y="0.5" width="12.5" height="11" fill="#fafafa" stroke="#888" stroke-width="0.3"/><circle cx="1.8" cy="1.8" r="0.7" fill="#000"/><circle cx="1.8" cy="3.8" r="0.7" fill="#000"/><circle cx="1.8" cy="5.8" r="0.7" fill="#000"/><circle cx="1.8" cy="7.8" r="0.7" fill="#000"/><circle cx="1.8" cy="9.8" r="0.7" fill="#000"/><rect x="4" y="0.5" width="7.5" height="11" fill="url(#lsg)"/><rect x="4.3" y="5.5" width="2.5" height="1.2" fill="#1a2a60"/><rect x="7.6" y="5.5" width="3" height="1.2" fill="#1a2a60"/><rect x="11.4" y="0.5" width="1.1" height="11" fill="#1a2a1a"/></svg>
<div class="ht" style="left:303px;top:88px">Listing:  VE2_14</div>
<svg class="a" style="left:858px;top:86px" width="16" height="16" viewBox="0 0 16 16"><path d="M0.5 0.5h7l3 3v8h-10z" fill="#fafafa" stroke="#c8c8c8"/><path d="M5.5 4.5h7l3 3v8h-10z" fill="#fafafa" stroke="#c8c8c8"/></svg>
<svg class="a" style="left:880px;top:86px" width="16" height="16" viewBox="0 0 16 16"><path d="M0.5 0.5h7l3 3v8h-10z" fill="#9c9c9c" stroke="#8a8a8a"/><path d="M5.5 4.5h7l3 3v8h-10z" fill="#a4a4a4" stroke="#8a8a8a"/></svg>
<div class="vs" style="left:905px;top:86px;height:16px"></div>
<svg class="a" style="left:913px;top:86px" width="16" height="16" viewBox="0 0 16 16"><path d="M1 1v11l3-3l2 5l2-1l-2-5h4z" fill="#fff" stroke="#111"/><rect x="9" y="11" width="6" height="4" fill="#f6d24a"/></svg>
<div class="vs" style="left:939px;top:86px;height:16px"></div>
<svg class="a" style="left:948px;top:86px" width="17" height="17" viewBox="0 0 17 17"><rect x="0.6" y="0.6" width="15.8" height="10" rx="0.8" fill="#3a3a3a"/><rect x="1.8" y="1.8" width="3" height="2" fill="#fff"/><rect x="5.8" y="1.8" width="9.4" height="2" fill="#fff"/><rect x="1.8" y="4.8" width="4.4" height="2" fill="#fff"/><rect x="7" y="4.8" width="5" height="2" fill="#f4b040"/><rect x="12.8" y="4.8" width="2.4" height="2" fill="#fff"/><rect x="1.8" y="7.8" width="6.5" height="2" fill="#fff"/><rect x="9" y="7.8" width="6.2" height="2" fill="#fff"/><path d="M8.5 11.5v4M6 13.5l2.5 2.5l2.5-2.5" stroke="#333" stroke-width="1.6" fill="none"/></svg>
<svg class="a" style="left:970px;top:86px" width="17" height="17" viewBox="0 0 17 17"><path d="M0.5 1.5h5v13h-5" fill="none" stroke="#4a84d8" stroke-width="1.1"/><path d="M16 1.5h-4.5v13h4.5" fill="none" stroke="#6aa0e8" stroke-width="1.1"/><path d="M0.5 3.5h3.5M12.5 3.5h3" stroke="#4ab04a" stroke-width="0.9"/><path d="M0.5 6h3.5M0.5 8h3.5M0.5 10h3.5M0.5 12h3.5" stroke="#9ab8e8" stroke-width="0.7"/><path d="M13 6v0.8M13 8v0.8M13 10v0.8" stroke="#9ab8e8" stroke-width="1"/><path d="M5 10.5l6-4.5" stroke="#2a9a2a" stroke-width="2.6" stroke-linecap="round"/></svg>
<div class="vs" style="left:995px;top:86px;height:16px"></div>
<svg class="a" style="left:1003px;top:86px" width="17" height="17"><use href="#cam"/></svg>
<div class="vs" style="left:1029px;top:86px;height:16px"></div>
<svg class="a" style="left:1037px;top:86px" width="17" height="17" viewBox="0 0 17 17"><rect x="0.5" y="1.5" width="10" height="14" fill="#fff" stroke="#333" stroke-dasharray="1.5 1"/><rect x="2" y="5" width="7" height="2" fill="#ccc"/><rect x="2" y="9" width="7" height="4" fill="#6aa0e0"/><rect x="11" y="0.5" width="5" height="16" fill="#e8a820" stroke="#b07810"/><path d="M12.5 3v11" stroke="#fff4c0" stroke-dasharray="1 1.5"/></svg>
<svg class="a" style="left:1060px;top:92px" width="7" height="5"><use href="#tri"/></svg>
<div class="vs" style="left:1072px;top:86px;height:16px"></div>
<svg class="a" style="left:1077px;top:87px" width="13" height="13"><use href="#xx"/></svg>
<div class="a" style="left:277px;top:106px;width:1px;height:944px;background:#fff"></div>
<div class="a" style="left:279px;top:106px;width:21px;height:932px;background:#f0f0f0"></div>
<div class="a" style="left:286px;top:106px;width:3px;height:932px;background:#a6a6a6"></div>
<div class="a" style="left:299px;top:106px;width:1px;height:932px;background:#c4c4c4"></div>
<div class="a" style="left:296px;top:571px;width:3px;height:3px;border-radius:2px;background:#a8a8a8"></div>
<div class="a" style="left:296px;top:576px;width:3px;height:3px;border-radius:2px;background:#a8a8a8"></div>
<div class="a" style="left:296px;top:581px;width:3px;height:3px;border-radius:2px;background:#a8a8a8"></div>
<div class="white" style="left:300px;top:106px;width:769px;height:932px"></div>
<div class="a" style="left:1069px;top:106px;width:10px;height:932px;background:#f4f4f4"></div>
<div class="a" style="left:1071px;top:200px;width:6px;height:17px;border-radius:3px;background:#d8d8d8"></div>
<div class="a" style="left:1079px;top:106px;width:17px;height:944px;background:#f0f0f0"></div>
<div class="a" style="left:1081px;top:108px;width:8px;height:4px;background:#d0d0d0;border:1px solid #e4eefa"></div>
<div class="a" style="left:1086px;top:180px;width:9px;height:203px;background:#a8a8a8"></div>
<div class="a" style="left:1086px;top:185px;width:9px;height:1px;background:#fff"></div>
<div class="a" style="left:1086px;top:303px;width:9px;height:1px;background:#fff"></div>
<div class="a" style="left:1086px;top:309px;width:9px;height:1px;background:#fff"></div>
<div class="a" style="left:1079px;top:414px;width:10px;height:4px;background:#e0d080;border:1px solid #f0d020"></div>
<div class="a" style="left:1086px;top:417px;width:9px;height:5px;background:#a8a8a8"></div>
<div class="a" style="left:1086px;top:725px;width:9px;height:3px;background:#a8a8a8"></div>
<div class="a" style="left:1086px;top:784px;width:9px;height:3px;background:#a8a8a8"></div>
<div class="a" style="left:300px;top:1038px;width:769px;height:10px;background:#f4f4f4"></div>
<div class="a" style="left:301px;top:1040px;width:564px;height:6px;border-radius:3px;background:#dadada"></div>
<div class="a" style="left:1095px;top:106px;width:1px;height:944px;background:#c4c4c4"></div><div class="a" style="left:1096px;top:80px;width:1px;height:971px;background:#8e8e8e"></div><div class="a" style="left:1097px;top:80px;width:1px;height:971px;background:#6a6a6a"></div>
<div class="a" style="left:277px;top:1049px;width:820px;height:2px;background:#727272"></div>
<div class="a" style="left:300px;top:106px;width:768px;height:932px;overflow:hidden">
<div class="L" style="left:627.2px;top:1.2000000000000028px"><span class="cr">00400018</span>(*),</div>
<div class="L" style="left:627.2px;top:24.200000000000003px"><span class="cr">004020e0</span>,</div>
<div class="L" style="left:627.2px;top:47.2px"><span class="cr">00402120</span>(*),</div>
<div class="L" style="left:627.2px;top:70.2px"><span class="cr">_elfSectionHe</span></div>
<div class="L" style="left:199.5px;top:93.2px">start.S:68 (2)</div>
<div class="L" style="left:24.5px;top:116.2px">00401080</div>
<div class="L cb" style="left:119.5px;top:116.2px">31 ed</div>
<div class="L cm" style="left:229.5px;top:116.2px">XOR</div>
<div class="L" style="left:309.5px;top:116.2px"><span class="creg">EBP</span><span class="cp">,</span><span class="creg">EBP</span></div>
<div class="L" style="left:199.5px;top:139.2px">start.S:84 (3)</div>
<div class="L" style="left:24.5px;top:162.2px">00401082</div>
<div class="L cb" style="left:119.5px;top:162.2px">49 89</div>
<div class="L cm" style="left:229.5px;top:162.2px">MOV</div>
<div class="L" style="left:309.5px;top:162.2px"><span class="creg">R9</span><span class="cp">,</span><span class="creg">RDX</span></div>
<div class="L cb" style="left:119.5px;top:185.2px">d1</div>
<div class="L" style="left:199.5px;top:208.2px">start.S:90 (1)</div>
<div class="L" style="left:24.5px;top:231.2px">00401085</div>
<div class="L cb" style="left:119.5px;top:231.2px">5e</div>
<div class="L cm" style="left:229.5px;top:231.2px">POP</div>
<div class="L" style="left:309.5px;top:231.2px"><span class="creg">RSI</span></div>
<div class="L" style="left:199.5px;top:254.2px">start.S:93 (3)</div>
<div class="L" style="left:24.5px;top:277.2px">00401086</div>
<div class="L cb" style="left:119.5px;top:277.2px">48 89</div>
<div class="L cm" style="left:229.5px;top:277.2px">MOV</div>
<div class="L" style="left:309.5px;top:277.2px"><span class="creg">RDX</span><span class="cp">,</span><span class="creg">RSP</span></div>
<div class="L cb" style="left:119.5px;top:300.2px">e2</div>
<div class="L" style="left:199.5px;top:323.2px">start.S:95 (4)</div>
<div class="L" style="left:24.5px;top:346.2px">00401089</div>
<div class="L cb" style="left:119.5px;top:346.2px">48 83</div>
<div class="L cm" style="left:229.5px;top:346.2px">AND</div>
<div class="L" style="left:309.5px;top:346.2px"><span class="creg">RSP</span><span class="cp">,</span><span class="cnum">-0x10</span></div>
<div class="L cb" style="left:119.5px;top:369.2px">e4 f0</div>
<div class="L" style="left:199.5px;top:392.2px">start.S:98 (1)</div>
<div class="L" style="left:24.5px;top:415.2px">0040108d</div>
<div class="L cb" style="left:119.5px;top:415.2px">50</div>
<div class="L cm" style="left:229.5px;top:415.2px">PUSH</div>
<div class="L" style="left:309.5px;top:415.2px"><span class="creg">RAX</span></div>
<div class="L" style="left:199.5px;top:438.2px">start.S:102 (1)</div>
<div class="L" style="left:24.5px;top:461.2px">0040108e</div>
<div class="L cb" style="left:119.5px;top:461.2px">54</div>
<div class="L cm" style="left:229.5px;top:461.2px">PUSH</div>
<div class="L" style="left:309.5px;top:461.2px"><span class="creg">RSP</span><span class="cp">=&gt;</span><span class="cvar">local_10</span></div>
<div class="L" style="left:199.5px;top:484.2px">start.S:116 (7)</div>
<div class="L" style="left:24.5px;top:507.2px">0040108f</div>
<div class="L cb" style="left:119.5px;top:507.2px">49 c7</div>
<div class="L cm" style="left:229.5px;top:507.2px">MOV</div>
<div class="L" style="left:309.5px;top:507.2px"><span class="creg">R8</span><span class="cp">,</span><span class="cfn">__libc_csu_fini</span></div>
<div class="L cb" style="left:119.5px;top:530.2px">c0 f0</div>
<div class="L cb" style="left:119.5px;top:553.2px">12 40 …</div>
<div class="L" style="left:199.5px;top:576.2px">start.S:117 (7)</div>
<div class="L" style="left:24.5px;top:599.2px">00401096</div>
<div class="L cb" style="left:119.5px;top:599.2px">48 c7</div>
<div class="L cm" style="left:229.5px;top:599.2px">MOV</div>
<div class="L" style="left:309.5px;top:599.2px"><span class="creg">RCX</span><span class="cp">,</span><span class="cfn">__libc_csu_init</span></div>
<div class="L cb" style="left:119.5px;top:622.2px">c1 80</div>
<div class="L cb" style="left:119.5px;top:645.2px">12 40 …</div>
<div class="L" style="left:199.5px;top:668.2px">start.S:119 (7)</div>
<div class="L" style="left:24.5px;top:691.2px">0040109d</div>
<div class="L cb" style="left:119.5px;top:691.2px">48 c7</div>
<div class="L cm" style="left:229.5px;top:691.2px">MOV</div>
<div class="L" style="left:309.5px;top:691.2px"><span class="creg">RDI</span><span class="cp">,</span><span class="cfn">main</span></div>
<div class="L cb" style="left:119.5px;top:714.2px">c7 26</div>
<div class="L cb" style="left:119.5px;top:737.2px">11 40 …</div>
<div class="L" style="left:199.5px;top:760.2px">start.S:123 (5)</div>
<div class="L" style="left:24.5px;top:783.2px">004010a4</div>
<div class="L cb" style="left:119.5px;top:783.2px">e8 97</div>
<div class="L cm" style="left:229.5px;top:783.2px">CALL</div>
<div class="L" style="left:309.5px;top:783.2px"><span class="cext">&lt;EXTERNAL&gt;::__libc_start_main</span></div>
<div class="L cund" style="left:649.5px;top:783.2px">undefined _</div>
<div class="L cb" style="left:119.5px;top:806.2px">ff ff</div>
<div class="L cb" style="left:119.5px;top:829.2px">ff</div>
<div class="L" style="left:199.5px;top:852.2px">start.S:126 (1)</div>
<div class="L" style="left:24.5px;top:875.2px">004010a9</div>
<div class="L cb" style="left:119.5px;top:875.2px">f4</div>
<div class="L cm" style="left:229.5px;top:875.2px">HLT</div>
<div class="L cstar" style="left:199.5px;top:921.2px">****************************************</div>
</div>
<div class="hd" style="left:1104px;top:82px;width:813px;background:linear-gradient(90deg,#a8a8a8 0px,#adadad 252px,#f0f0f0 560px)"></div>
<svg class="a" style="left:1108px;top:86px" width="17" height="17"><use href="#cf"/></svg>
<div class="ht" style="left:1127px;top:88px">Decompile: __libc_csu_init -  (VE2_14)</div>
<svg class="a" style="left:1705px;top:86px" width="16" height="17" viewBox="0 0 16 17"><path d="M13.8 6.2C12.5 2.2 7 1.2 4.2 4.4L6.2 6.3L0.6 7.4L1.2 1.8L2.8 3.2C6.5-0.8 13.5 0.5 15 5.6z" fill="#22c022" stroke="#0a7a0a" stroke-width="0.6" stroke-linejoin="round"/><path d="M2.2 10.8C3.5 14.8 9 15.8 11.8 12.6L9.8 10.7L15.4 9.6L14.8 15.2L13.2 13.8C9.5 17.8 2.5 16.5 1 11.4z" fill="#22c022" stroke="#0a7a0a" stroke-width="0.6" stroke-linejoin="round"/></svg>
<svg class="a" style="left:1727px;top:86px" width="17" height="16" viewBox="0 0 17 16"><rect x="6.2" y="0.8" width="3.6" height="3.6" fill="#b8d4f8" stroke="#5a8ad8" stroke-width="0.9"/><path d="M8 4.5v3.8M2.3 8.3h5.7M2.3 8.3v2.2" stroke="#999" stroke-width="0.9" fill="none"/><rect x="0.6" y="10.6" width="3.6" height="3.6" fill="#7ac07a" stroke="#2a8a2a" stroke-width="0.9"/><rect x="6.2" y="10.6" width="3.6" height="3.6" fill="#7ac07a" stroke="#2a8a2a" stroke-width="0.9"/><rect x="11.8" y="10.6" width="3.6" height="3.6" fill="#e06060" stroke="#b01a1a" stroke-width="0.9"/></svg>
<div class="t" style="left:1748px;top:87px;font-size:16px;font-weight:bold;color:#3a86f0;letter-spacing:-1.5px;transform:scaleX(0.88);transform-origin:0 0">Ro</div>
<div class="vs" style="left:1775px;top:86px;height:16px"></div>
<svg class="a" style="left:1783px;top:86px" width="16" height="16" viewBox="0 0 16 16"><path d="M0.5 0.5h7l3 3v8h-10z" fill="#fafafa" stroke="#c8c8c8"/><path d="M5.5 4.5h7l3 3v8h-10z" fill="#fafafa" stroke="#c8c8c8"/></svg>
<div class="vs" style="left:1808px;top:86px;height:16px"></div>
<svg class="a" style="left:1817px;top:86px" width="17" height="17" viewBox="0 0 17 17"><rect x="0.5" y="0.5" width="14" height="16" fill="#d8e6f8" stroke="#3a6ac8"/><path d="M4 13l1-3l8-8l2 2l-8 8z" fill="#f0b030" stroke="#a06010" stroke-width="0.7"/></svg>
<div class="vs" style="left:1842px;top:86px;height:16px"></div>
<svg class="a" style="left:1850px;top:86px" width="17" height="17"><use href="#cam"/></svg>
<div class="vs" style="left:1871px;top:86px;height:16px"></div>
<svg class="a" style="left:1877px;top:91px" width="11" height="7"><use href="#tri"/></svg>
<svg class="a" style="left:1898px;top:87px" width="13" height="13"><use href="#xx"/></svg>
<div class="a" style="left:1102px;top:106px;width:1px;height:944px;background:#fff"></div>
<div class="a" style="left:1104px;top:106px;width:27px;height:944px;background:#f0f0f0"></div>
<div class="a" style="left:1130px;top:106px;width:1px;height:932px;background:#c8c8c8"></div>
<div class="white" style="left:1131px;top:106px;width:785px;height:932px"></div>
<div class="a" style="left:1131px;top:1038px;width:785px;height:10px;background:#f4f4f4"></div>
<div class="a" style="left:1132px;top:1040px;width:510px;height:6px;border-radius:3px;background:#dadada"></div>
<div class="a" style="left:1916px;top:106px;width:1px;height:944px;background:#bdbdbd"></div><div class="a" style="left:1917px;top:80px;width:2px;height:971px;background:#727272"></div>
<div class="a" style="left:1102px;top:1049px;width:817px;height:2px;background:#727272"></div>
<div class="a" style="left:1131px;top:132px;width:2px;height:25px;background:#ffc0c8"></div>
<div class="a" style="left:1133px;top:132px;width:46px;height:25px;background:#ffff80"></div>
<div class="a" style="left:1104px;top:106px;width:812px;height:932px;overflow:hidden">
<div class="a" style="left:27px;top:0;width:785px;height:932px">
<div class="D num" style="top:2px">1</div>
<div class="D num" style="top:27px">2</div>
<div class="D" style="left:1px;top:27px"><span class="dkw">void</span><span class="dp"> </span><span class="dfn">__libc_csu_init</span><span class="dp">(</span><span class="dkw">int</span><span class="dp"> </span><span class="dpa">argc</span><span class="dp">,</span><span class="dkw">char</span><span class="dp"> **</span><span class="dpa">argv</span><span class="dp">,</span><span class="dkw">char</span><span class="dp"> **</span><span class="dpa">envp</span><span class="dp">)</span></div>
<div class="D num" style="top:52px">3</div>
<div class="D num" style="top:77px">4</div>
<div class="D" style="left:1px;top:77px"><span class="dp">{</span></div>
<div class="D num" style="top:102px">5</div>
<div class="D" style="left:1px;top:102px"><span class="dp">  </span><span class="dkw">undefined4</span><span class="dp"> </span><span class="dlv">in_register_0000003c</span><span class="dp">;</span></div>
<div class="D num" style="top:127px">6</div>
<div class="D num" style="top:152px">7</div>
<div class="D" style="left:1px;top:152px"><span class="dp">                    </span><span class="dcm">/* Unresolved local var: size_t size@[???] */</span></div>
<div class="D num" style="top:177px">8</div>
<div class="D" style="left:1px;top:177px"><span class="dp">  </span><span class="dfn">_init</span><span class="dp">((</span><span class="dkw">EVP_PKEY_CTX</span><span class="dp"> *)CONCAT44(</span><span class="dlv">in_register_0000003c</span><span class="dp">,</span><span class="dpa">argc</span><span class="dp">));</span></div>
<div class="D num" style="top:202px">9</div>
<div class="D" style="left:1px;top:202px"><span class="dp">                    </span><span class="dcm">/* Unresolved local var: size_t i@[???] */</span></div>
<div class="D num" style="top:227px">10</div>
<div class="D" style="left:1px;top:227px"><span class="dp">  </span><span class="dfn">frame_dummy</span><span class="dp">(</span><span class="dpa">argc</span><span class="dp">,</span><span class="dpa">argv</span><span class="dp">,</span><span class="dpa">envp</span><span class="dp">);</span></div>
<div class="D num" style="top:252px">11</div>
<div class="D" style="left:1px;top:252px"><span class="dp">  </span><span class="dkw">return</span><span class="dp">;</span></div>
<div class="D num" style="top:277px">12</div>
<div class="D" style="left:1px;top:277px"><span class="dp">}</span></div>
<div class="D num" style="top:302px">13</div>
</div></div>
<svg class="a" style="left:2px;top:1058px" width="16" height="16" viewBox="0 0 16 16"><circle cx="8" cy="8" r="7.4" fill="#fff" stroke="#333" stroke-width="0.9"/><path d="M3 10c1-2 3-3 5-5c1-1 3-2 4-1c1 2 0 5-1 7l-2 1l1-3l-2 1l-1 3l-1-1l1-2c-1 0-3 1-4 0z" fill="#e02010"/></svg>
<div class="fld" style="left:21px;top:1054px;width:1412px;height:25px"></div>
<div class="fld" style="left:1437px;top:1054px;width:103px;height:25px"></div>
<div class="fld" style="left:1543px;top:1054px;width:137px;height:25px"></div>
<div class="fld" style="left:1684px;top:1054px;width:208px;height:25px"></div>
<div class="fld" style="left:1895px;top:1054px;width:30px;height:25px"></div>
<div class="tr" style="left:1441px;top:1060px">00400000</div>
<div class="tr" style="left:1688px;top:1060px">Elf64_Ehdr  (64)</div>
</body></html>
